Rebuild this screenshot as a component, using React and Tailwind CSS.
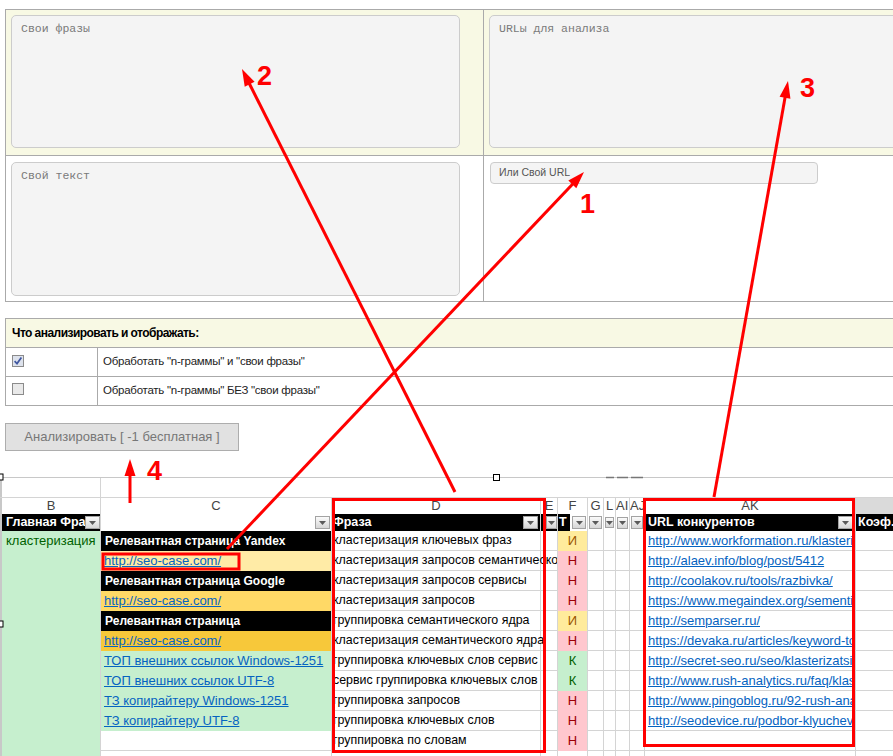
import React from "react";

const Dd = ({ cls = "w-[15px] h-[13px]" }) => (
  <span
    className={`flex shrink-0 items-center justify-center bg-linear-to-b from-[#fbfbfb] to-[#d6d6d6] border border-[#a3a3a3] ${cls}`}
  >
    <svg width="7" height="4" viewBox="0 0 7 4">
      <path d="M0 0h7L3.5 4z" fill="#5a5a5a" />
    </svg>
  </span>
);

const Check = ({ on }) => (
  <svg width="12" height="12" viewBox="0 0 12 12">
    <rect x="0.5" y="0.5" width="11" height="11" fill={on ? "#dde2ec" : "#e9e9e9"} stroke="#8b8b8b" />
    {on && <path d="M2.6 6.2 L5 8.6 L9.4 2.6" stroke="#3f56a0" strokeWidth="1.7" fill="none" />}
  </svg>
);

const cRows = [
  { bg: "bg-black", text: "Релевантная страница Yandex", head: true },
  { bg: "bg-[#ffeba6]", text: "http://seo-case.com/" },
  { bg: "bg-black", text: "Релевантная страница Google", head: true },
  { bg: "bg-[#ffd966]", text: "http://seo-case.com/" },
  { bg: "bg-black", text: "Релевантная страница", head: true },
  { bg: "bg-[#f7c83a]", text: "http://seo-case.com/" },
  { bg: "bg-[#c6efce]", text: "ТОП внешних ссылок Windows-1251" },
  { bg: "bg-[#c6efce]", text: "ТОП внешних ссылок UTF-8" },
  { bg: "bg-[#c6efce]", text: "ТЗ копирайтеру Windows-1251" },
  { bg: "bg-[#c6efce]", text: "ТЗ копирайтеру UTF-8" },
  { bg: "bg-white border-b border-[#d4d4d4]", text: "" },
];

const phrases = [
  "кластеризация ключевых фраз",
  "кластеризация запросов семантического ядра",
  "кластеризация запросов сервисы",
  "кластеризация запросов",
  "группировка семантического ядра",
  "кластеризация семантического ядра",
  "группировка ключевых слов сервис",
  "сервис группировка ключевых слов",
  "группировка запросов",
  "группировка ключевых слов",
  "группировка по словам",
];

const types = ["И", "Н", "Н", "Н", "И", "Н", "К", "К", "Н", "Н", "Н"];
const typeStyle = {
  И: "bg-[#ffeb9c] text-[#9c5700]",
  Н: "bg-[#ffc7ce] text-[#9c0006]",
  К: "bg-[#c6efce] text-[#006100]",
};

const urls = [
  "http://www.workformation.ru/klasterizaciya",
  "http://alaev.info/blog/post/5412",
  "http://coolakov.ru/tools/razbivka/",
  "https://www.megaindex.org/sementic-core",
  "http://semparser.ru/",
  "https://devaka.ru/articles/keyword-tools",
  "http://secret-seo.ru/seo/klasterizatsiya",
  "http://www.rush-analytics.ru/faq/klasterizaciya",
  "http://www.pingoblog.ru/92-rush-analytics",
  "http://seodevice.ru/podbor-klyuchevyh-slov",
  "",
];

const grid = "border-r border-[#d4d4d4]";
const cell = "h-full shrink-0 flex items-center overflow-hidden whitespace-nowrap";

const DataRow = ({ i }) => {
  const c = cRows[i];
  return (
    <div className="flex h-[20px] text-[13px]">
      <div className="w-[2px] shrink-0 bg-[#c8c8c8]" />
      <div className={`${cell} w-[99px] bg-[#c6efce] ${grid} pl-[4px] text-[#006100]`}>
        {i === 0 ? "кластеризация" : ""}
      </div>
      <div className={`${cell} w-[231px] ${c.bg} ${grid} pl-[3px]`}>
        {c.head ? (
          <span className="text-white font-bold text-[12px] pl-[1px]">{c.text}</span>
        ) : (
          <span className="text-[#0563c1] underline">{c.text}</span>
        )}
      </div>
      <div className={`h-full shrink-0 flex items-center w-[209px] border-b ${grid}`}>
        <span className="block shrink-0 w-[226px] overflow-hidden whitespace-nowrap pl-[1px] text-[12.4px] text-black">
          {phrases[i]}
        </span>
      </div>
      <div className={`${cell} w-[17px] border-b ${grid}`} />
      <div className={`${cell} w-[30px] justify-center ${typeStyle[types[i]]} ${grid}`}>
        {types[i]}
      </div>
      <div className={`${cell} w-[16px] border-b ${grid}`} />
      <div className={`${cell} w-[12px] border-b ${grid}`} />
      <div className={`${cell} w-[14px] border-b ${grid}`} />
      <div className={`${cell} w-[15px] border-b ${grid}`} />
      <div className={`${cell} w-[211px] border-b ${grid} pl-[3px]`}>
        <span className="text-[#0563c1] underline">{urls[i]}</span>
      </div>
      <div className={`${cell} w-[80px] border-b ${grid}`} />
    </div>
  );
};

const arrows = [
  [455, 492, 242, 69],
  [714, 497, 788, 81],
  [227, 549, 584, 172],
  [130, 503, 130, 459],
];

const Arrow = ({ a }) => {
  const [x1, y1, x2, y2] = a;
  const dx = x2 - x1;
  const dy = y2 - y1;
  const len = Math.hypot(dx, dy);
  const ux = dx / len;
  const uy = dy / len;
  const L = 17;
  const W = 5.5;
  const bx = x2 - ux * L;
  const by = y2 - uy * L;
  const px = -uy;
  const py = ux;
  return (
    <g>
      <line x1={x1} y1={y1} x2={bx + ux * 3} y2={by + uy * 3} stroke="#ff0000" strokeWidth="3" />
      <polygon
        points={`${x2},${y2} ${bx + px * W},${by + py * W} ${bx - px * W},${by - py * W}`}
        fill="#ff0000"
      />
    </g>
  );
};

export default function App() {
  return (
    <div className="relative w-[893px] h-[756px] overflow-hidden bg-white font-['Liberation_Sans',Arial,sans-serif] text-black">
      {/* form */}
      <div className="ml-[5px] mt-[9px] w-[1000px] border border-[#aaaaaa]">
        <div className="flex bg-[#f8f9e4] border-b border-[#aaaaaa]">
          <div className="w-[478px] h-[145px] border-r border-[#aaaaaa] pl-[5px] pt-[5px]">
            <div className="w-[449px] h-[133px] rounded-[5px] border border-[#cccccc] bg-[#f4f4f4] px-[9px] pt-[4px] font-['Liberation_Mono',monospace] text-[11.5px] text-[#7a7a7a]">
              Свои фразы
            </div>
          </div>
          <div className="flex-1 h-[145px] pl-[5px] pt-[5px]">
            <div className="w-[460px] h-[133px] rounded-[5px] border border-[#cccccc] bg-[#f4f4f4] px-[9px] pt-[4px] font-['Liberation_Mono',monospace] text-[11.5px] text-[#7a7a7a]">
              URLы для анализа
            </div>
          </div>
        </div>
        <div className="flex bg-white">
          <div className="w-[478px] h-[145px] border-r border-[#aaaaaa] pl-[5px] pt-[6px]">
            <div className="w-[449px] h-[134px] rounded-[5px] border border-[#cccccc] bg-[#f4f4f4] px-[9px] pt-[4px] font-['Liberation_Mono',monospace] text-[11.5px] text-[#7a7a7a]">
              Свой текст
            </div>
          </div>
          <div className="flex-1 h-[145px] pl-[6px] pt-[6px]">
            <div className="w-[328px] h-[22px] rounded-[4px] border border-[#cccccc] bg-[#f4f4f4] pl-[8px] flex items-center text-[10.5px] text-[#555555]">
              Или Свой URL
            </div>
          </div>
        </div>
      </div>

      {/* options */}
      <div className="ml-[5px] mt-[16px] w-[1000px] border border-[#aaaaaa] text-[11.5px]">
        <div className="h-[29px] bg-[#f8f9e4] border-b border-[#aaaaaa] flex items-center pl-[6px] text-[12px] font-bold tracking-[-0.55px]">
          Что анализировать и отображать:
        </div>
        <div className="flex h-[29px] border-b border-[#aaaaaa]">
          <div className="w-[92px] border-r border-[#aaaaaa] pl-[6px] pt-[7px]">
            <Check on />
          </div>
          <div className="flex items-center pl-[5px] text-[#222] tracking-[-0.25px]">Обработать "n-граммы" и "свои фразы"</div>
        </div>
        <div className="flex h-[28px]">
          <div className="w-[92px] border-r border-[#aaaaaa] pl-[6px] pt-[6px]">
            <Check />
          </div>
          <div className="flex items-center pl-[5px] text-[#222] tracking-[-0.25px]">Обработать "n-граммы" БЕЗ "свои фразы"</div>
        </div>
      </div>

      <div className="ml-[5px] mt-[17px] w-[234px] h-[28px] bg-[#e1e1e1] border border-[#adadad] flex items-center justify-center text-[13px] text-[#777777]">
        Анализировать [ -1 бесплатная ]
      </div>

      {/* spreadsheet */}
      <div className="mt-[26px] border-t border-[#c8c8c8]">
        <div className="flex h-[19px]">
          <div className="w-[2px] shrink-0 bg-[#c8c8c8]" />
          <div className={`w-[99px] shrink-0 ${grid}`} />
        </div>
        <div className="flex h-[17px] border-t border-[#d4d4d4] text-[13px] text-[#444444]">
          <div className="w-[2px] shrink-0 bg-[#c8c8c8]" />
          <div className={`w-[99px] shrink-0 ${grid} text-center leading-[16px]`}>B</div>
          <div className={`w-[231px] shrink-0 ${grid} text-center leading-[16px]`}>C</div>
          <div className={`w-[209px] shrink-0 ${grid} text-center leading-[16px]`}>D</div>
          <div className={`w-[17px] shrink-0 ${grid} text-center leading-[16px]`}>E</div>
          <div className={`w-[30px] shrink-0 ${grid} text-center leading-[16px]`}>F</div>
          <div className={`w-[16px] shrink-0 ${grid} text-center leading-[16px]`}>G</div>
          <div className={`w-[12px] shrink-0 ${grid} text-center leading-[16px]`}>L</div>
          <div className={`w-[14px] shrink-0 ${grid} overflow-hidden leading-[16px]`}>AI</div>
          <div className={`w-[15px] shrink-0 ${grid} overflow-hidden leading-[16px]`}>AJ</div>
          <div className={`w-[211px] shrink-0 ${grid} text-center leading-[16px]`}>AK</div>
          <div className="w-[80px] shrink-0 bg-[#dadada]" />
        </div>
        <div className="flex h-[17px] text-[12.5px] font-bold text-white">
          <div className="w-[2px] shrink-0 bg-[#c8c8c8]" />
          <div className={`w-[99px] shrink-0 flex items-center bg-black ${grid}`}>
            <span className="flex-1 overflow-hidden whitespace-nowrap pl-[4px]">Главная Фраза</span>
            <Dd />
          </div>
          <div className={`w-[231px] shrink-0 flex items-center justify-end bg-white ${grid} pr-[1px]`}>
            <Dd />
          </div>
          <div className={`w-[209px] shrink-0 flex items-center bg-black ${grid} pr-[2px]`}>
            <span className="flex-1 overflow-hidden whitespace-nowrap pl-[1px]">Фраза</span>
            <Dd />
          </div>
          <div className={`w-[17px] shrink-0 flex items-center justify-end bg-black ${grid}`}>
            <Dd cls="w-[11px] h-[13px]" />
          </div>
          <div className={`w-[30px] shrink-0 flex items-center bg-white ${grid}`}>
            <span className="w-[12px] h-full bg-black overflow-hidden pl-[1px] leading-[17px]">T</span>
            <Dd cls="ml-[2px] w-[14px] h-[13px]" />
          </div>
          <div className={`w-[16px] shrink-0 flex items-center justify-center ${grid}`}>
            <Dd cls="w-[13px] h-[13px]" />
          </div>
          <div className={`w-[12px] shrink-0 flex items-center justify-center ${grid}`}>
            <Dd cls="w-[9px] h-[11px]" />
          </div>
          <div className={`w-[14px] shrink-0 flex items-center justify-center ${grid}`}>
            <Dd cls="w-[11px] h-[12px]" />
          </div>
          <div className={`w-[15px] shrink-0 flex items-center justify-center ${grid}`}>
            <Dd cls="w-[12px] h-[13px]" />
          </div>
          <div className={`w-[211px] shrink-0 flex items-center bg-black ${grid} pr-[2px]`}>
            <span className="flex-1 overflow-hidden whitespace-nowrap pl-[3px]">URL конкурентов</span>
            <Dd />
          </div>
          <div className="w-[80px] shrink-0 flex items-center bg-black pl-[2px]">Коэф.</div>
        </div>
        {phrases.map((_, i) => (
          <DataRow key={i} i={i} />
        ))}
        <div className="flex h-[20px]">
          <div className="w-[2px] shrink-0 bg-[#c8c8c8]" />
          <div className={`w-[99px] shrink-0 bg-[#c6efce] ${grid}`} />
          <div className={`w-[231px] shrink-0 ${grid}`} />
          <div className={`w-[209px] shrink-0 ${grid}`} />
          <div className={`w-[17px] shrink-0 ${grid}`} />
          <div className={`w-[30px] shrink-0 ${grid}`} />
          <div className={`w-[16px] shrink-0 ${grid}`} />
          <div className={`w-[12px] shrink-0 ${grid}`} />
          <div className={`w-[14px] shrink-0 ${grid}`} />
          <div className={`w-[15px] shrink-0 ${grid}`} />
          <div className={`w-[211px] shrink-0 ${grid}`} />
        </div>
      </div>

      {/* annotations */}
      <svg className="absolute left-0 top-0 pointer-events-none" width="893" height="756" viewBox="0 0 893 756">
        <rect x="-3" y="474" width="6" height="6" fill="#fff" stroke="#000" />
        <rect x="493.5" y="474.5" width="6" height="6" fill="#fff" stroke="#000" />
        <rect x="-3" y="621" width="6" height="6" fill="#fff" stroke="#000" />
        <line x1="606" y1="477.5" x2="614" y2="477.5" stroke="#777" strokeWidth="1.5" />
        <line x1="617" y1="477.5" x2="628" y2="477.5" stroke="#777" strokeWidth="1.5" />
        <line x1="631" y1="477.5" x2="643" y2="477.5" stroke="#777" strokeWidth="1.5" />
        <rect x="333.5" y="499.5" width="211" height="252" fill="none" stroke="#ff0000" strokeWidth="3" />
        <rect x="644.5" y="499.5" width="209" height="246" fill="none" stroke="#ff0000" strokeWidth="3" />
        <rect x="103" y="554" width="136" height="15" fill="none" stroke="#ff0000" strokeWidth="3" />
        {arrows.map((a, i) => (
          <Arrow key={i} a={a} />
        ))}
        <g fill="#ff0000" fontFamily="Liberation Sans, Arial, sans-serif" fontWeight="bold" fontSize="27">
          <text x="257" y="85">2</text>
          <text x="800" y="97">3</text>
          <text x="580" y="213">1</text>
          <text x="147" y="480">4</text>
        </g>
      </svg>
    </div>
  );
}
